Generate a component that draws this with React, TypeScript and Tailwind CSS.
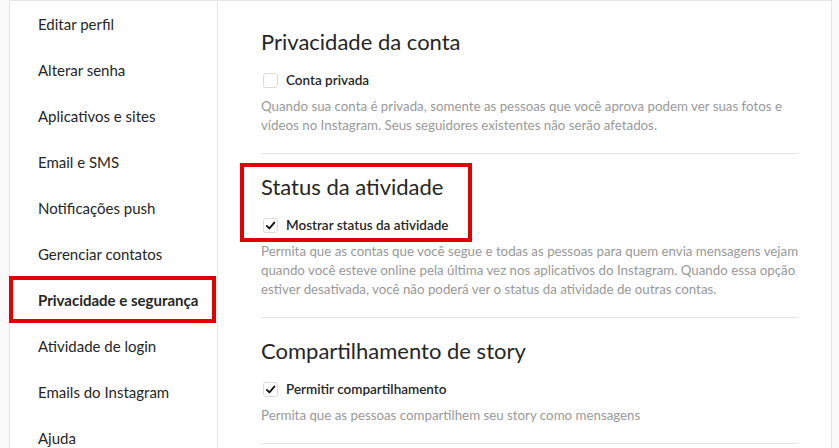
import React from 'react'

const menuItems = [
  'Editar perfil',
  'Alterar senha',
  'Aplicativos e sites',
  'Email e SMS',
  'Notificações push',
  'Gerenciar contatos',
  'Privacidade e segurança',
  'Atividade de login',
  'Emails do Instagram',
  'Ajuda',
]

function Checkbox({ checked }: { checked: boolean }) {
  return (
    <span className="w-[15px] h-[15px] rounded-[3px] border border-[#dbdbdb] bg-white flex items-center justify-center">
      {checked && (
        <svg width="11" height="11" viewBox="0 0 12 12" fill="none">
          <path d="M2 6.4 L4.8 9.2 L10.2 2.8" stroke="#111" strokeWidth="2" strokeLinecap="round" strokeLinejoin="round" />
        </svg>
      )}
    </span>
  )
}

interface SectionProps {
  title: string
  label: string
  checked: boolean
  lines: string[]
  first?: boolean
  highlight?: boolean
}

function Section({ title, label, checked, lines, first, highlight }: SectionProps) {
  return (
    <section className={`relative border-b border-[#e6e6e6] pb-[18px] ${first ? 'pt-[26px]' : 'pt-[18px]'}`}>
      {highlight && (
        <div className="absolute top-[9px] left-[-21px] w-[232px] h-[79px] border-4 border-[#e30000]" />
      )}
      <h2 className="text-[22px] leading-[30px] text-[#262626] mb-[13px]">{title}</h2>
      <label className="flex items-center h-5 pl-[2px] gap-[8px]">
        <Checkbox checked={checked} />
        <span className="text-[13.5px] font-semibold text-[#262626]">{label}</span>
      </label>
      <p className="mt-[7px] text-[13.3px] leading-[19px] text-[#999999]">
        {lines.map((l, i) => (
          <span key={i} className="block whitespace-nowrap">{l}</span>
        ))}
      </p>
    </section>
  )
}

export default function App() {
  const active = 'Privacidade e segurança'
  return (
    <div
      className="w-[839px] h-[448px] overflow-hidden bg-[#fafafa] pl-[9px] pr-[7px]"
      style={{ fontFamily: 'Lato, "Open Sans", sans-serif' }}
    >
      <div className="flex h-full bg-white border-l border-r border-t border-[#e6e6e6]">
        {/* Sidebar */}
        <nav className="w-[208px] shrink-0 border-r border-[#e6e6e6]">
          {menuItems.map((item) => (
            <div
              key={item}
              className={`relative h-[46px] flex items-center pl-[28px] text-[15px] text-[#262626] whitespace-nowrap ${
                item === active ? 'font-bold' : ''
              }`}
            >
              {item === active && (
                <div className="absolute left-[-1px] right-[1px] top-[-1px] bottom-0 border-4 border-[#e30000]" />
              )}
              {item}
            </div>
          ))}
        </nav>

        {/* Main */}
        <main className="flex-1 pl-[43px] pr-[49px]">
          <Section
            first
            title="Privacidade da conta"
            label="Conta privada"
            checked={false}
            lines={[
              'Quando sua conta é privada, somente as pessoas que você aprova podem ver suas fotos e',
              'vídeos no Instagram. Seus seguidores existentes não serão afetados.',
            ]}
          />
          <Section
            highlight
            title="Status da atividade"
            label="Mostrar status da atividade"
            checked={true}
            lines={[
              'Permita que as contas que você segue e todas as pessoas para quem envia mensagens vejam',
              'quando você esteve online pela última vez nos aplicativos do Instagram. Quando essa opção',
              'estiver desativada, você não poderá ver o status da atividade de outras contas.',
            ]}
          />
          <Section
            title="Compartilhamento de story"
            label="Permitir compartilhamento"
            checked={true}
            lines={['Permita que as pessoas compartilhem seu story como mensagens']}
          />
        </main>
      </div>
    </div>
  )
}
